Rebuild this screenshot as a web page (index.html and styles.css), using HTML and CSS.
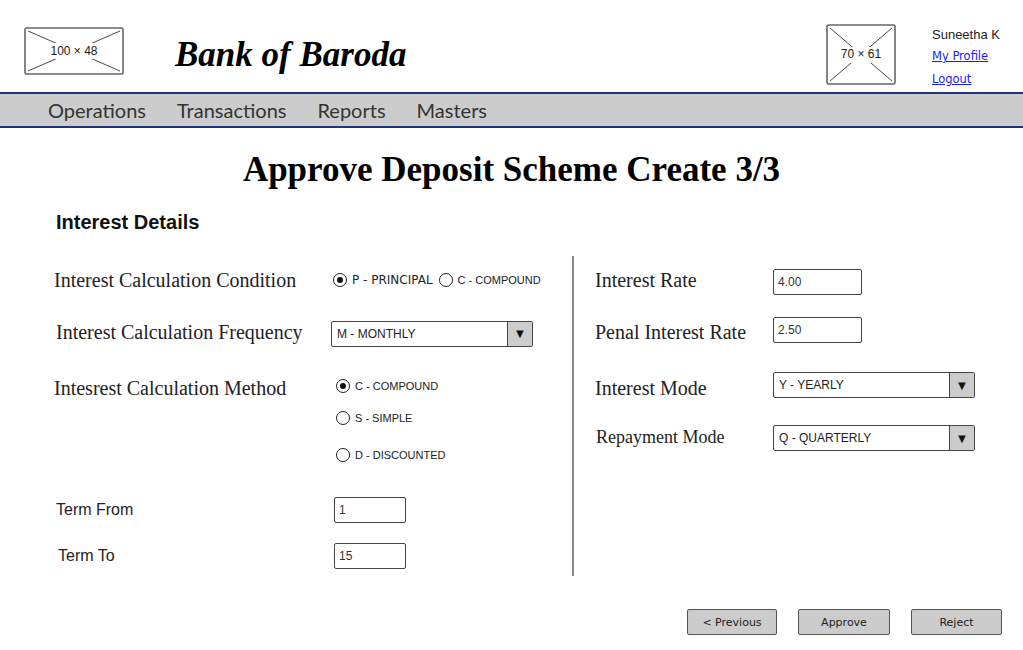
FILE: index.html
```html
<!DOCTYPE html>
<html>
<head>
<meta charset="utf-8">
<link rel="stylesheet" href="styles.css">
</head>
<body>
<header class="header">
  <div class="ph ph-logo">
    <svg width="100" height="48" viewBox="0 0 100 48">
      <rect x="1" y="1" width="98" height="46" rx="1.5" fill="#fff" stroke="#666" stroke-width="1.6"/>
      <line x1="4" y1="4" x2="96" y2="44" stroke="#333" stroke-width="0.9"/>
      <line x1="96" y1="4" x2="4" y2="44" stroke="#333" stroke-width="0.9"/>
      <rect x="25" y="16" width="50" height="16" fill="#fff"/>
    </svg>
    <span class="ph-text">100 × 48</span>
  </div>
  <div class="brand">Bank of Baroda</div>
  <div class="spacer"></div>
  <div class="ph ph-user">
    <svg width="70" height="61" viewBox="0 0 70 61">
      <rect x="1" y="1" width="68" height="59" rx="1.5" fill="#fff" stroke="#666" stroke-width="1.6"/>
      <line x1="4" y1="4" x2="66" y2="57" stroke="#333" stroke-width="0.9"/>
      <line x1="66" y1="4" x2="4" y2="57" stroke="#333" stroke-width="0.9"/>
      <rect x="12" y="23" width="46" height="16" fill="#fff"/>
    </svg>
    <span class="ph-text">70 × 61</span>
  </div>
  <div class="user">
    <div class="user-name">Suneetha K</div>
    <a class="user-link" href="#">My Profile</a>
    <a class="user-link" href="#">Logout</a>
  </div>
</header>
<nav class="nav">
  <span class="nav-item">Operations</span>
  <span class="nav-item">Transactions</span>
  <span class="nav-item">Reports</span>
  <span class="nav-item">Masters</span>
</nav>
<h1 class="title">Approve Deposit Scheme Create 3/3</h1>
<h2 class="section">Interest Details</h2>
<main class="form">
  <div class="col col-left">
    <div class="row row-cond">
      <div class="label serif">Interest Calculation Condition</div>
      <div class="radios-inline">
        <span class="radio checked"></span><span class="opt opt-p">P - PRINCIPAL</span>
        <span class="radio"></span><span class="opt">C - COMPOUND</span>
      </div>
    </div>
    <div class="row row-freq">
      <div class="label serif">Interest Calculation Frequency</div>
      <div class="select select-freq"><span class="select-text">M - MONTHLY</span><span class="select-arrow">▼</span></div>
    </div>
    <div class="row row-method">
      <div class="label serif">Intesrest Calculation Method</div>
      <div class="radio-list">
        <div class="radio-item"><span class="radio checked"></span><span class="opt">C - COMPOUND</span></div>
        <div class="radio-item ri-2"><span class="radio"></span><span class="opt">S - SIMPLE</span></div>
        <div class="radio-item ri-3"><span class="radio"></span><span class="opt">D - DISCOUNTED</span></div>
      </div>
    </div>
    <div class="row row-from">
      <div class="label sans">Term From</div>
      <div class="input input-term">1</div>
    </div>
    <div class="row row-to">
      <div class="label sans label-to">Term To</div>
      <div class="input input-term">15</div>
    </div>
  </div>
  <div class="col col-right">
    <div class="row rrow-1">
      <div class="rlabel serif">Interest Rate</div>
      <div class="input input-rate in-1">4.00</div>
    </div>
    <div class="row rrow-2">
      <div class="rlabel serif">Penal Interest Rate</div>
      <div class="input input-rate in-2">2.50</div>
    </div>
    <div class="row rrow-3">
      <div class="rlabel serif">Interest Mode</div>
      <div class="select select-mode"><span class="select-text">Y - YEARLY</span><span class="select-arrow">▼</span></div>
    </div>
    <div class="row rrow-4">
      <div class="rlabel serif rlabel-rep">Repayment Mode</div>
      <div class="select select-mode"><span class="select-text">Q - QUARTERLY</span><span class="select-arrow">▼</span></div>
    </div>
  </div>
</main>
<div class="actions">
  <button class="btn btn-prev">&lt; Previous</button>
  <button class="btn btn-approve">Approve</button>
  <button class="btn btn-reject">Reject</button>
</div>
</body>
</html>
```
FILE: styles.css
```css
* { box-sizing: border-box; }
html, body { margin: 0; padding: 0; background: #fff; }
body { width: 1023px; font-family: "Liberation Sans", Arial, sans-serif; color: #222; }

.header { height: 92px; display: flex; align-items: flex-start; padding-left: 24px; }
.ph { position: relative; }
.ph svg { display: block; }
.ph-text { position: absolute; left: 0; right: 0; text-align: center; font-family: "Liberation Sans", Arial, sans-serif; font-size: 12px; color: #222; }
.ph-logo { margin-top: 27px; }
.ph-logo .ph-text { top: 17px; }
.ph-user { margin-top: 24px; }
.ph-user .ph-text { top: 23px; }
.brand { margin-left: 51px; margin-top: 35px; font-family: "Liberation Serif", "Times New Roman", serif; font-weight: bold; font-style: italic; font-size: 35px; line-height: 40px; color: #000; }
.spacer { flex: 1; }
.user { width: 91px; margin-left: 36px; margin-top: 27px; display: flex; flex-direction: column; }
.user-name { font-size: 13px; line-height: 16px; color: #222; }
.user-link { font-family: "DejaVu Sans", sans-serif; font-size: 11.5px; color: #1a1aff; text-decoration: underline; line-height: 14px; margin-top: 6px; }
.user-link + .user-link { margin-top: 9px; }

.nav { height: 36px; background: #cccccc; border-top: 2px solid #1c3580; border-bottom: 2px solid #1c3580; display: flex; align-items: center; padding-left: 48px; gap: 31px; }
.nav-item { font-family: Lato, "Liberation Sans", sans-serif; font-size: 20px; color: #333; line-height: 24px; margin-top: -1px; }

.title { margin: 22px 0 0; text-align: center; font-family: "Liberation Serif", "Times New Roman", serif; font-weight: bold; font-size: 35px; line-height: 40px; color: #000; }
.section { margin: 21px 0 0 56px; font-family: "Liberation Sans", Arial, sans-serif; font-weight: bold; font-size: 20px; line-height: 22px; color: #111; }

.form { display: flex; margin-top: 23px; }
.col { display: flex; flex-direction: column; }
.col-left { width: 574px; padding-left: 54px; padding-top: 8px; border-right: 2px solid #888; height: 320px; }
.col-right { padding-left: 21px; padding-top: 8px; }

.row { display: flex; align-items: center; }
.serif { font-family: "Liberation Serif", "Times New Roman", serif; font-size: 20px; color: #222; }
.sans { font-family: "Liberation Sans", Arial, sans-serif; font-size: 16px; color: #222; }
.label { width: 278px; line-height: 32px; flex: none; white-space: nowrap; }

.row-cond { height: 32px; }
.row-freq { height: 32px; margin-top: 20px; padding-left: 2px; }
.row-freq .label { width: 275px; }
.row-freq .select { margin-top: 3px; }
.row-method { align-items: flex-start; margin-top: 24px; }
.row-from { height: 32px; margin-top: 25px; padding-left: 2px; }
.row-to { height: 32px; margin-top: 14px; padding-left: 4px; }
.row-from .label { width: 278px; }
.row-to .label { width: 276px; }

.radios-inline { display: flex; align-items: center; margin-left: 1px; }
.radio { width: 14px; height: 14px; border: 1.5px solid #222; border-radius: 50%; display: inline-flex; align-items: center; justify-content: center; flex: none; background: #fff; }
.radio.checked::after { content: ""; width: 6px; height: 6px; border-radius: 50%; background: #111; }
.opt { font-family: "Liberation Sans", Arial, sans-serif; font-size: 11px; color: #222; margin-left: 5px; margin-right: 5px; white-space: nowrap; }
.opt-p { font-family: "DejaVu Sans", sans-serif; font-size: 12px; margin-right: 6px; }

.radio-list { display: flex; flex-direction: column; margin-left: 4px; }
.radio-item { display: flex; align-items: center; height: 28px; }
.ri-2 { margin-top: 4px; }
.ri-3 { margin-top: 9px; }

.input { border: 1.3px solid #444; border-radius: 2px; background: #fff; font-family: "Liberation Sans", Arial, sans-serif; font-size: 12px; color: #333; display: flex; align-items: center; padding-left: 4px; }
.input-term { width: 72px; height: 26px; margin-left: 0; }

.select { border: 1.3px solid #444; border-radius: 2px; background: #fff; display: flex; height: 26px; }
.select-text { flex: 1; font-family: "Liberation Sans", Arial, sans-serif; font-size: 12px; color: #222; display: flex; align-items: center; padding-left: 5px; }
.select-arrow { width: 25px; background: #cccccc; border-left: 1.3px solid #444; display: flex; align-items: center; justify-content: center; font-size: 13px; color: #111; }
.select-freq { width: 202px; margin-left: 0; }
.select-mode { width: 202px; }

.rlabel { width: 178px; line-height: 32px; flex: none; white-space: nowrap; }
.rlabel-rep { font-size: 18px; padding-left: 1px; }
.rrow-1 { height: 32px; }
.rrow-2 { height: 32px; margin-top: 20px; }
.rrow-3 { height: 32px; margin-top: 24px; }
.rrow-4 { height: 32px; margin-top: 17px; }
.input-rate { width: 89px; height: 26px; }
.in-1 { margin-top: 4px; }
.in-2 { margin-top: -4px; }
.rrow-3 .select { margin-top: -6px; }
.rrow-4 .select { margin-top: 2px; }

.actions { display: flex; justify-content: flex-end; gap: 21px; padding-right: 21px; margin-top: 33px; }
.btn { height: 26px; background: #cccccc; border: 1.3px solid #555; border-radius: 2px; font-family: "DejaVu Sans", sans-serif; font-size: 11px; color: #222; padding: 0; }
.btn-prev { width: 90px; }
.btn-approve { width: 92px; }
.btn-reject { width: 91px; }
```
